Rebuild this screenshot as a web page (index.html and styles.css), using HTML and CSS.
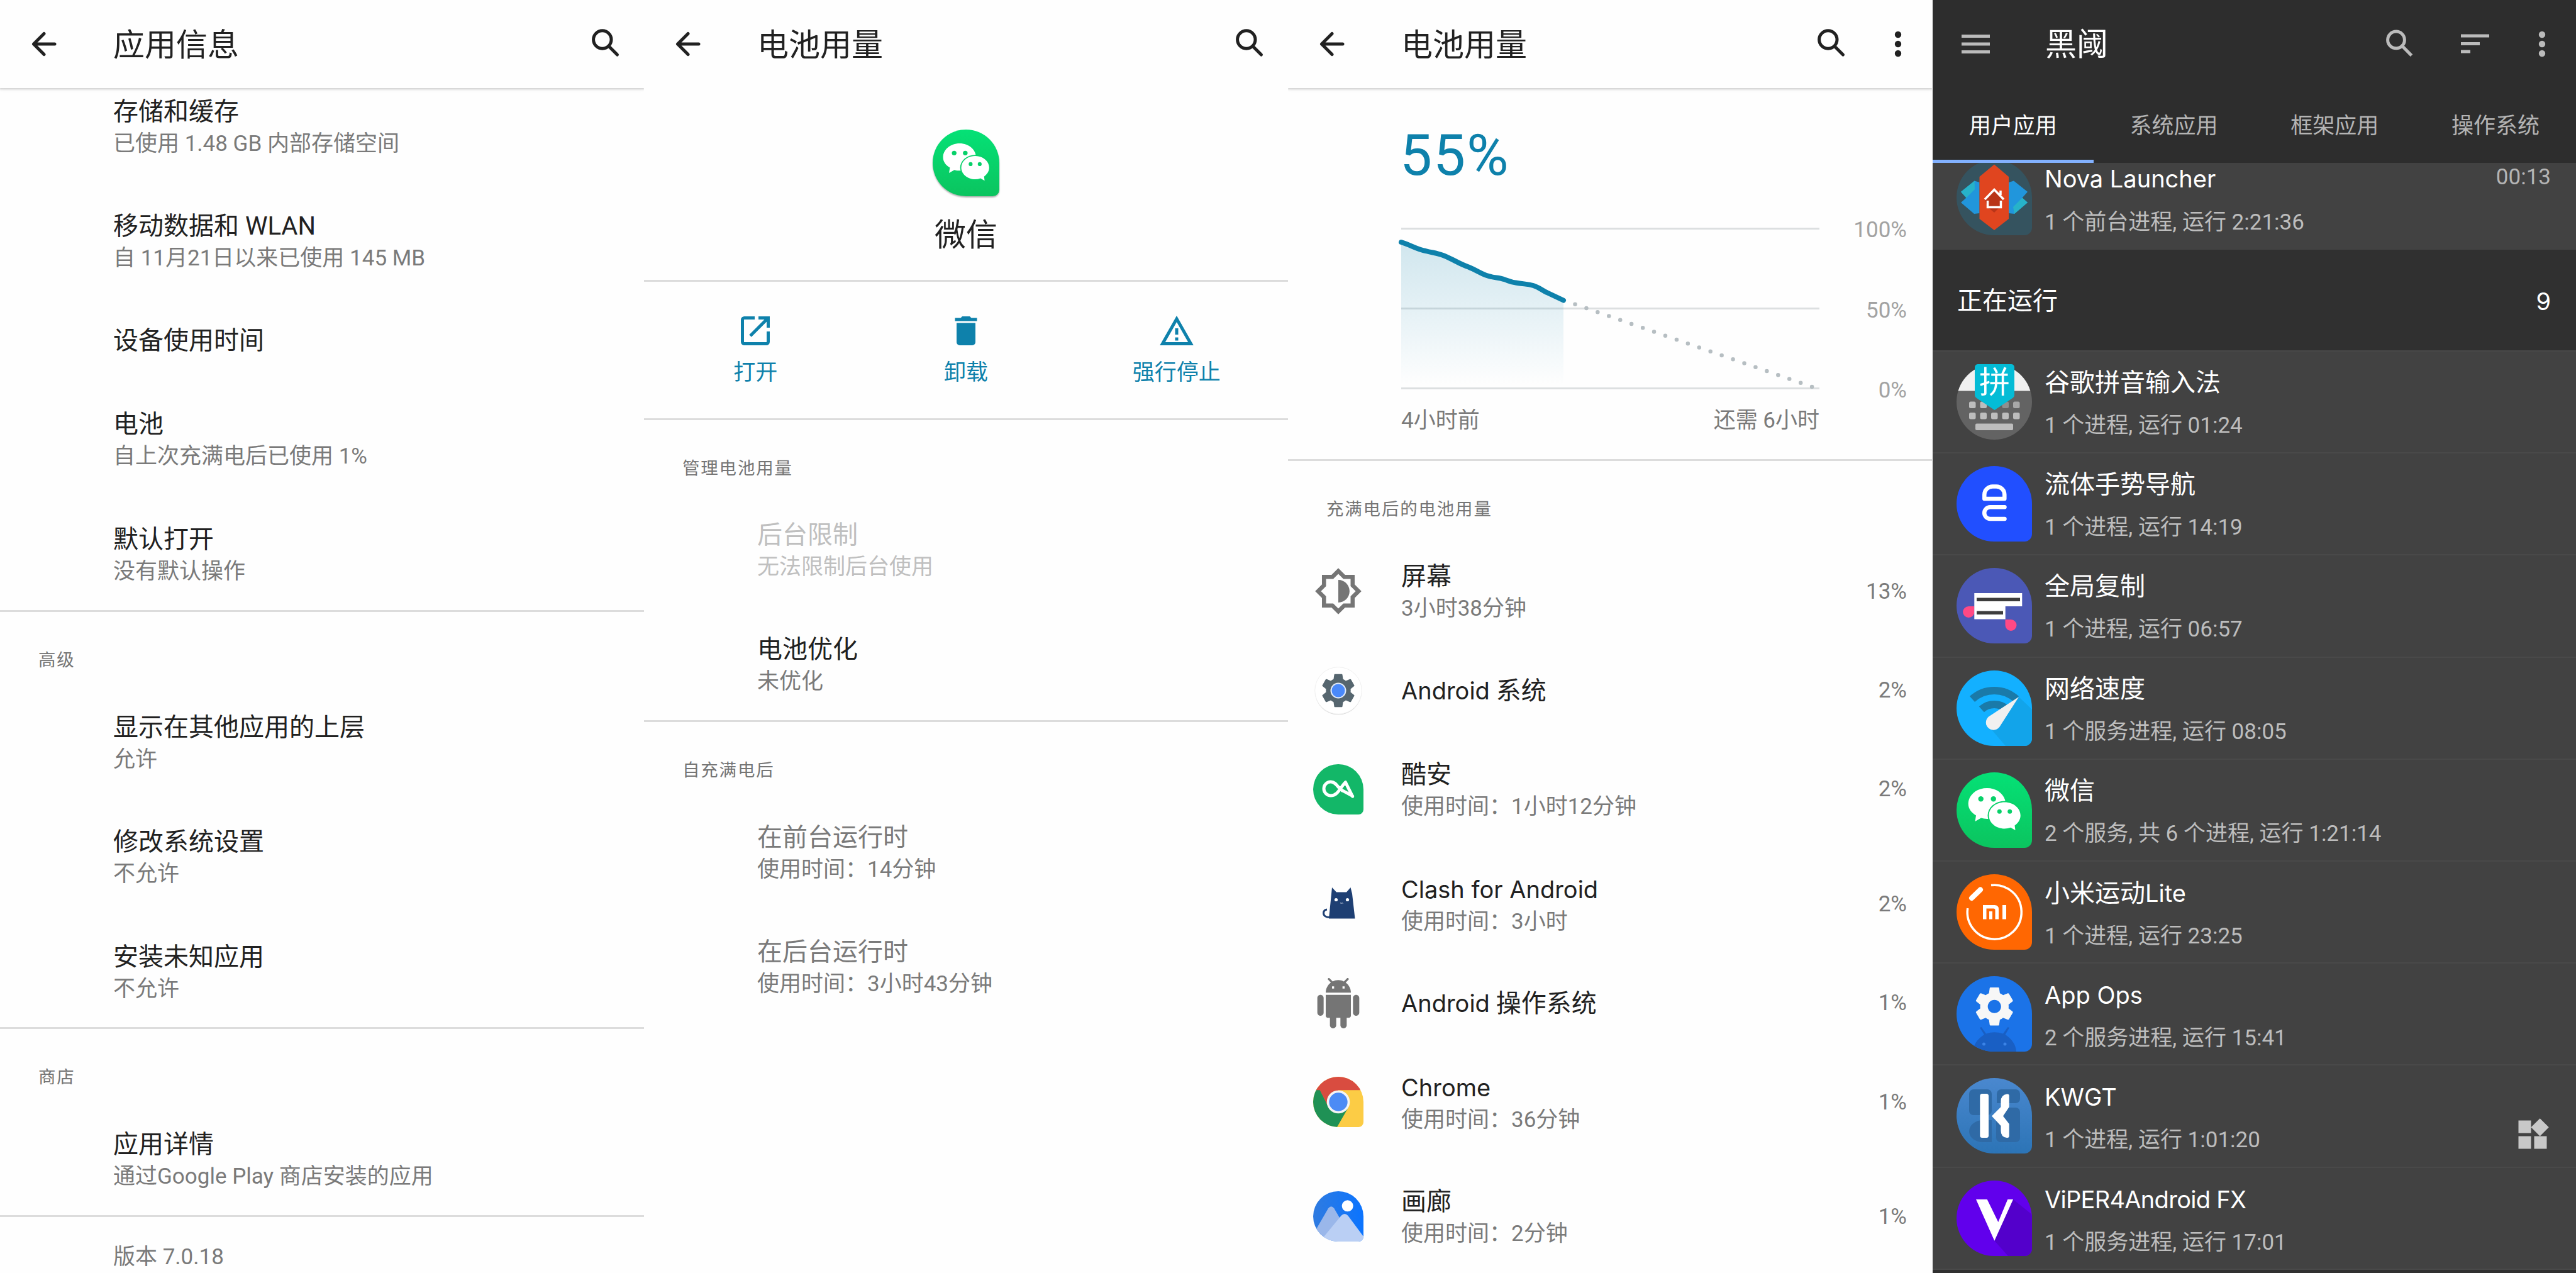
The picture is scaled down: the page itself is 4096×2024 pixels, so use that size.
FILE: index.html
```html
<!DOCTYPE html>
<html lang="zh-CN">
<head>
<meta charset="utf-8">
<title>应用信息</title>
<link rel="stylesheet" href="styles.css">
</head>
<body>
<svg class="defs" width="0" height="0" aria-hidden="true">
  <defs>
    <linearGradient id="g-wechat" x1="0" y1="0" x2="0" y2="1"><stop offset="0" stop-color="#05e176"/><stop offset="1" stop-color="#0bc45f"/></linearGradient>
    <linearGradient id="g-kwgt" x1="0" y1="0" x2="0" y2="1"><stop offset="0" stop-color="#4a88cf"/><stop offset="1" stop-color="#2c74b6"/></linearGradient>
    <linearGradient id="g-gallery" x1="0" y1="0" x2="1" y2="0"><stop offset="0" stop-color="#2f7be0"/><stop offset="1" stop-color="#0b74ff"/></linearGradient>
    <linearGradient id="g-area" x1="0" y1="0" x2="0" y2="1"><stop offset="0" stop-color="#0e81ab" stop-opacity=".19"/><stop offset=".45" stop-color="#0e81ab" stop-opacity=".11"/><stop offset="1" stop-color="#0e81ab" stop-opacity="0"/></linearGradient>
    <clipPath id="drop"><path d="M60 0A60 60 0 0 1 120 60V108A12 12 0 0 1 108 120H60A60 60 0 0 1 60 0Z"/></clipPath>
    <clipPath id="disc"><circle cx="60" cy="60" r="60"/></clipPath>
    <symbol id="i-back" viewBox="0 0 40 40"><path d="M37 20H4M20 3.5L3.5 20L20 36.5" fill="none" stroke="currentColor" stroke-width="5" stroke-linecap="round" stroke-linejoin="round"/></symbol>
    <symbol id="i-search" viewBox="0 0 48 48"><g fill="none" stroke="currentColor" stroke-width="5"><circle cx="19.8" cy="17" r="14.2"/><path d="M30 27.5L43.5 41" stroke-linecap="round"/></g></symbol>
    <symbol id="i-search-flat" viewBox="0 0 48 48"><g fill="none" stroke="currentColor" stroke-width="5"><circle cx="19" cy="17.4" r="13.4"/><path d="M29 27.5L43.5 42.3"/></g></symbol>
    <symbol id="i-more" viewBox="0 0 48 48"><g fill="currentColor"><circle cx="24" cy="9" r="5.2"/><circle cx="24" cy="24" r="5.2"/><circle cx="24" cy="39" r="5.2"/></g></symbol>
    <symbol id="i-menu" viewBox="0 0 48 48"><path fill="currentColor" d="M2 9h45v5H2zM2 21.500h45v5H2zM2 34h45v5H2z"/></symbol>
    <symbol id="i-sort" viewBox="0 0 48 48"><path fill="currentColor" d="M2 8.500h45v5H2zM2 21h30v5H2zM2 33.500h15v5H2z"/></symbol>
    <symbol id="i-open" viewBox="0 0 48 48"><g fill="none" stroke="currentColor" stroke-width="5"><path d="M23 3.500H6.500a3 3 0 0 0-3 3V41.500a3 3 0 0 0 3 3H41.500a3 3 0 0 0 3-3V25"/><path d="M29 3.500H44.500V19M44 4L16 32"/></g></symbol>
    <symbol id="i-trash" viewBox="0 0 48 48"><path fill="currentColor" d="M6.500 3.500H15.500L18 1H30L32.500 3.500H41.500V8.500H6.500ZM9 11.500H39V42a5 5 0 0 1-5 5H14a5 5 0 0 1-5-5Z"/></symbol>
    <symbol id="i-warn" viewBox="0 0 54 48"><path d="M27 5L49.500 44.500H4.500Z" fill="none" stroke="currentColor" stroke-width="5"/><path fill="currentColor" d="M24.500 20h5v10h-5zM24.500 34.500h5v5h-5z"/></symbol>
    <symbol id="i-gear" viewBox="0 0 24 24"><path fill="currentColor" d="M19.430 12.980c.04-.32.07-.64.07-.98s-.03-.66-.07-.98l2.110-1.650c.19-.15.24-.42.12-.64l-2-3.460c-.12-.22-.39-.3-.61-.22l-2.490 1c-.52-.4-1.080-.73-1.690-.98l-.38-2.650C14.460 2.180 14.250 2 14 2h-4c-.25 0-.46.18-.49.42l-.38 2.650c-.61.25-1.170.59-1.690.98l-2.490-1c-.23-.09-.49 0-.61.22l-2 3.460c-.13.22-.07.49.12.64l2.110 1.650c-.04.32-.07.65-.07.98s.03.66.07.98l-2.110 1.650c-.19.15-.24.42-.12.64l2 3.460c.12.22.39.3.61.22l2.490-1c.52.4 1.080.73 1.690.98l.38 2.650c.03.24.24.42.49.42h4c.25 0 .46-.18.49-.42l.38-2.650c.61-.25 1.170-.59 1.690-.98l2.490 1c.23.09.49 0 .61-.22l2-3.460c.12-.22.07-.49-.12-.64l-2.110-1.650zM12 15.500c-1.930 0-3.500-1.570-3.500-3.500s1.570-3.500 3.500-3.500 3.500 1.570 3.500 3.500-1.570 3.500-3.500 3.500z"/></symbol>
    <symbol id="a-wechat" viewBox="0 0 120 120">
      <g clip-path="url(#drop)"><rect width="120" height="120" fill="url(#g-wechat)"/></g>
      <path fill="#fff" d="M48.500 25C65 25 78 36 78 50S65 74 48.500 74q-5 0-9.500-1.400L29.500 78l1.500-9.500C23.500 64 18.700 57.500 18.700 50 18.700 36 32 25 48.500 25Z"/>
      <ellipse cx="76.500" cy="68.500" rx="27" ry="23" fill="#07d169"/>
      <path fill="#fff" d="M76.500 47.500C90.500 47.500 101.700 57 101.700 68.500 101.700 75 98 80.500 92.500 84.500L93.500 92 86 87.800q-4.500 1.700-9.500 1.700C62.500 89.500 51.500 80 51.500 68.500S62.500 47.500 76.500 47.500Z"/>
      <g fill="#07d169"><circle cx="38.700" cy="42.300" r="4.200"/><circle cx="58.700" cy="42.300" r="4.200"/><circle cx="68.300" cy="62.200" r="3.500"/><circle cx="84.700" cy="62.200" r="3.500"/></g>
    </symbol>
  </defs>
</svg>

<main class="screens">
  <section class="screen">
    <header class="bar bar--raised">
      <svg class="bar__back"><use href="#i-back"/></svg>
      <h1 class="bar__title">应用信息</h1>
      <svg class="bar__icon"><use href="#i-search"/></svg>
    </header>
    <div class="group group--first">
      <div class="row"><p class="row__title">存储和缓存</p><p class="row__sub">已使用 1.48 GB 内部存储空间</p></div>
      <div class="row"><p class="row__title">移动数据和 WLAN</p><p class="row__sub">自 11月21日以来已使用 145 MB</p></div>
      <div class="row row--single"><p class="row__title">设备使用时间</p></div>
      <div class="row"><p class="row__title">电池</p><p class="row__sub">自上次充满电后已使用 1%</p></div>
      <div class="row"><p class="row__title">默认打开</p><p class="row__sub">没有默认操作</p></div>
    </div>
    <div class="group">
      <h2 class="group__label">高级</h2>
      <div class="row"><p class="row__title">显示在其他应用的上层</p><p class="row__sub">允许</p></div>
      <div class="row"><p class="row__title">修改系统设置</p><p class="row__sub">不允许</p></div>
      <div class="row"><p class="row__title">安装未知应用</p><p class="row__sub">不允许</p></div>
    </div>
    <div class="group group--store">
      <h2 class="group__label">商店</h2>
      <div class="row"><p class="row__title">应用详情</p><p class="row__sub">通过Google Play 商店安装的应用</p></div>
    </div>
    <p class="version">版本 7.0.18</p>
  </section>

  <section class="screen">
    <header class="bar">
      <svg class="bar__back"><use href="#i-back"/></svg>
      <h1 class="bar__title">电池用量</h1>
      <svg class="bar__icon"><use href="#i-search"/></svg>
    </header>
    <div class="app-head">
      <svg class="app-head__icon"><use href="#a-wechat"/></svg>
      <p class="app-head__name">微信</p>
    </div>
    <div class="actions">
      <div class="action"><svg class="action__icon"><use href="#i-open"/></svg><span>打开</span></div>
      <div class="action"><svg class="action__icon"><use href="#i-trash"/></svg><span>卸载</span></div>
      <div class="action"><svg class="action__icon action__icon--wide"><use href="#i-warn"/></svg><span>强行停止</span></div>
    </div>
    <div class="group">
      <h2 class="group__label">管理电池用量</h2>
      <div class="row row--disabled"><p class="row__title">后台限制</p><p class="row__sub">无法限制后台使用</p></div>
      <div class="row"><p class="row__title">电池优化</p><p class="row__sub">未优化</p></div>
    </div>
    <div class="group group--last">
      <h2 class="group__label">自充满电后</h2>
      <div class="row row--info"><p class="row__title">在前台运行时</p><p class="row__sub">使用时间：14分钟</p></div>
      <div class="row row--info"><p class="row__title">在后台运行时</p><p class="row__sub">使用时间：3小时43分钟</p></div>
    </div>
  </section>

  <section class="screen">
    <header class="bar bar--raised bar--menu">
      <svg class="bar__back"><use href="#i-back"/></svg>
      <h1 class="bar__title">电池用量</h1>
      <svg class="bar__icon"><use href="#i-search"/></svg>
      <svg class="bar__icon"><use href="#i-more"/></svg>
    </header>
    <div class="battery">
      <p class="battery__level">55%</p>
      <div class="battery__chart">
        <svg class="battery__plot" viewBox="0 0 675 270">
          <path d="M10 11.500H675M10 138.500H675M10 265.500H675" stroke="#dcdfe0" stroke-width="3"/>
          <path d="M10 33C26 38 36 45 49 47C60 50 67 50 78 54.500C94 61 101 67 117 72.500C133 79 140 86 153 88C160 90 166 89 173 92C180 94 184 97 192 97.500C205 100 210 99 220 102C230 105 234 110 241.500 113L268 125.500V260H10Z" fill="url(#g-area)"/>
          <path d="M10 33C26 38 36 45 49 47C60 50 67 50 78 54.500C94 61 101 67 117 72.500C133 79 140 86 153 88C160 90 166 89 173 92C180 94 184 97 192 97.500C205 100 210 99 220 102C230 105 234 110 241.500 113L268 125.500" fill="none" stroke="#0e81ab" stroke-width="8" stroke-linecap="round" stroke-linejoin="round"/>
          <path d="M286.500 131.700L664 263.200" fill="none" stroke="#b6bec2" stroke-width="6.500" stroke-linecap="round" stroke-dasharray="0 18.990"/>
        </svg>
        <div class="battery__scale"><span>100%</span><span>50%</span><span>0%</span></div>
      </div>
      <div class="battery__range"><span>4小时前</span><span>还需 6小时</span></div>
    </div>
    <div class="usage">
      <h2 class="group__label">充满电后的电池用量</h2>
      <div class="use">
        <svg class="use__icon" viewBox="0 0 24.600 24.600"><path transform="translate(.3 .3)" fill="#757575" d="M20 8.690V4h-4.690L12 .69 8.690 4H4v4.690L.69 12 4 15.310V20h4.690L12 23.310 15.310 20H20v-4.690L23.310 12 20 8.690zM18 14.480V18h-3.520L12 20.480 9.520 18H6v-3.520L3.520 12 6 9.520V6h3.520L12 3.520 14.480 6H18v3.520L20.480 12 18 14.480zM12 6.500v11c3.030 0 5.500-2.470 5.500-5.500S15.030 6.500 12 6.500z"/></svg>
        <div class="use__text"><p class="row__title">屏幕</p><p class="row__sub">3小时38分钟</p></div><span class="use__pct">13%</span>
      </div>
      <div class="use use--single">
        <svg class="use__icon" viewBox="0 0 80 80"><circle cx="40" cy="41.500" r="37" fill="#d9d9d9"/><circle cx="40" cy="40" r="37.300" fill="#fff" stroke="#f0f0f0"/><g color="#56666f"><use href="#i-gear" x="8.500" y="8.500" width="63" height="63"/></g><circle cx="40" cy="40" r="14.500" fill="#56666f"/><circle cx="40" cy="40" r="12.500" fill="#e3ecfa"/><circle cx="40" cy="40" r="10.500" fill="#4a89fa"/></svg>
        <div class="use__text"><p class="row__title"><span class="product">Android</span> 系统</p></div><span class="use__pct">2%</span>
      </div>
      <div class="use">
        <svg class="use__icon" viewBox="0 0 120 120"><rect width="120" height="120" fill="#13b768" clip-path="url(#drop)"/><path d="M94 77L77 43C64 56 59 75 42 75A16.500 16.500 0 0 1 42 42C56 42 60 60 72 64L94 76Z" fill="none" stroke="#fff" stroke-width="7.500" stroke-linejoin="round"/></svg>
        <div class="use__text"><p class="row__title">酷安</p><p class="row__sub">使用时间：1小时12分钟</p></div><span class="use__pct">2%</span>
      </div>
      <div class="use">
        <svg class="use__icon" viewBox="0 0 80 80"><path fill="#1e3f73" d="M30 14L37 21.500H53L59.500 14L62 24L66.500 63.500H25L29 24Z"/><path d="M28 61.500C20 62 16.500 59 16.500 54.500Q17 49.500 22 49" fill="none" stroke="#1e3f73" stroke-width="3"/><circle cx="36.500" cy="33.500" r="2.600" fill="#fff"/><circle cx="54.500" cy="33.500" r="2.600" fill="#fff"/><path d="M43 38.500l1.500 1 1.500-1 1.500 1" stroke="#cdd6e6" fill="none"/></svg>
        <div class="use__text"><p class="row__title"><span class="product">Clash for Android</span></p><p class="row__sub">使用时间：3小时</p></div><span class="use__pct">2%</span>
      </div>
      <div class="use use--single">
        <svg class="use__icon" viewBox="0 0 24 24"><path fill="#757575" d="M6 18c0 .55.45 1 1 1h1v3.500c0 .83.67 1.500 1.500 1.500s1.500-.67 1.500-1.500V19h2v3.500c0 .83.67 1.500 1.500 1.500s1.500-.67 1.500-1.500V19h1c.55 0 1-.45 1-1V8H6v10zM3.500 8C2.670 8 2 8.670 2 9.500v7c0 .83.67 1.500 1.500 1.500S5 17.330 5 16.500v-7C5 8.670 4.330 8 3.500 8zm17 0c-.83 0-1.500.67-1.500 1.500v7c0 .83.67 1.500 1.500 1.500s1.500-.67 1.500-1.500v-7c0-.83-.67-1.500-1.500-1.500zm-4.970-5.840l1.300-1.300c.2-.2.2-.51 0-.71-.2-.2-.51-.2-.71 0l-1.480 1.480C13.850 1.230 12.950 1 12 1c-.96 0-1.860.23-2.660.63L7.850.15c-.2-.2-.51-.2-.71 0-.2.2-.2.51 0 .71l1.310 1.310C6.970 3.260 6 5.010 6 7h12c0-1.990-.97-3.750-2.470-4.840zM10 5H9V4h1v1zm5 0h-1V4h1v1z"/></svg>
        <div class="use__text"><p class="row__title"><span class="product">Android</span> 操作系统</p></div><span class="use__pct">1%</span>
      </div>
      <div class="use">
        <svg class="use__icon" viewBox="0 0 120 120"><g clip-path="url(#drop)"><rect width="120" height="120" fill="#fccc45"/><path fill="#1f9155" d="M0 30H16L37 73L60 60L84 73L57 120H0Z"/><path fill="#d94c40" d="M0 0H120V32H60V60L37 73L16 32H0Z"/></g><circle cx="60" cy="60" r="27.500" fill="#f4f4f4"/><circle cx="60" cy="60" r="22" fill="#4c8bf5"/></svg>
        <div class="use__text"><p class="row__title"><span class="product">Chrome</span></p><p class="row__sub">使用时间：36分钟</p></div><span class="use__pct">1%</span>
      </div>
      <div class="use">
        <svg class="use__icon" viewBox="0 0 120 120"><g clip-path="url(#drop)"><rect width="120" height="120" fill="url(#g-gallery)"/><path fill="#9ab7ea" d="M0 103L36 41Q43 32 50 41L96 120H0Z"/><path fill="#bacff4" d="M16 120L67 58Q75 50 83 58L126 116V120Z"/></g><circle cx="82" cy="35" r="13.500" fill="#fff"/></svg>
        <div class="use__text"><p class="row__title">画廊</p><p class="row__sub">使用时间：2分钟</p></div><span class="use__pct">1%</span>
      </div>
    </div>
  </section>

  <section class="screen screen--dark">
    <header class="dbar">
      <svg class="bar__icon"><use href="#i-menu"/></svg>
      <h1 class="dbar__title">黑阈</h1>
      <svg class="bar__icon"><use href="#i-search-flat"/></svg>
      <svg class="bar__icon dbar__sort"><use href="#i-sort"/></svg>
      <svg class="bar__icon"><use href="#i-more"/></svg>
    </header>
    <nav class="tabs"><span class="tab tab--on">用户应用</span><span class="tab">系统应用</span><span class="tab">框架应用</span><span class="tab">操作系统</span></nav>
    <div class="proc proc--top">
      <svg class="proc__icon" viewBox="0 0 120 120"><g clip-path="url(#drop)"><rect width="120" height="120" fill="#35535f"/></g><path fill="#2196dc" d="M28.600 33.500L36.500 36V85L28 86L7 68L15.500 60.500L7 51ZM91 33.500L83 36V85L92 86L113 68L104.500 60.500L113 51Z"/><path fill="#27b3c9" d="M28.600 33.500L7 51L15.500 60.500L29 47ZM92 86L113 68L104.500 60.500L90 75Z"/><path fill="#e0451f" d="M60 7.500L83 27V94L60 112L36.500 94V27Z"/><path fill="#b93518" d="M45 62L60 47L72 62V72L60 84L49 75Z"/><path d="M45 63L60 47.500L75 63M49.500 65V75.500H70.500V65M70 56V49" fill="none" stroke="#fff" stroke-width="3.500"/></svg>
      <div class="proc__text"><p class="proc__title"><span class="product">Nova Launcher</span></p><p class="proc__sub">1 个前台进程, 运行 2:21:36</p></div>
      <span class="proc__time">00:13</span>
    </div>
    <div class="running"><span>正在运行</span><span class="product">9</span></div>
    <div class="procs">
      <div class="proc">
        <svg class="proc__icon" viewBox="0 0 120 120"><g clip-path="url(#disc)"><rect width="120" height="120" fill="#636363"/><rect width="120" height="42.500" fill="#f1f1f1"/></g><g fill="#bdbdbd"><rect x="20" y="59.500" width="10.500" height="10.500" rx="2.500"/><rect x="37.500" y="59.500" width="10.500" height="10.500" rx="2.500"/><rect x="72.500" y="59.500" width="10.500" height="10.500" rx="2.500" fill="#8f8f8f"/><rect x="90" y="59.500" width="10.500" height="10.500" rx="2.500" fill="#a8a8a8"/><rect x="20" y="77" width="10.500" height="10.500" rx="2.500"/><rect x="37.500" y="77" width="10.500" height="10.500" rx="2.500"/><rect x="55" y="77" width="10.500" height="10.500" rx="2.500"/><rect x="72.500" y="77" width="10.500" height="10.500" rx="2.500"/><rect x="90" y="77" width="10.500" height="10.500" rx="2.500"/><rect x="30" y="94.500" width="60" height="10.500" rx="2"/></g><path fill="#04bcd6" d="M29 5a5 5 0 0 1 5-5H87a5 5 0 0 1 5 5V49Q92 52 89 54L60.500 73L32 54Q29 52 29 49Z"/><text class="pin" x="60.500" y="46" text-anchor="middle">拼</text></svg>
        <div class="proc__text"><p class="proc__title">谷歌拼音输入法</p><p class="proc__sub">1 个进程, 运行 01:24</p></div>
      </div>
      <div class="proc">
        <svg class="proc__icon" viewBox="0 0 120 120"><rect width="120" height="120" fill="#214fff" clip-path="url(#drop)"/><path d="M44.300 52V45.500a13 13 0 0 1 13-13h6a13 13 0 0 1 13 13V52ZM76.500 65.300H53.500a9.300 9.300 0 0 0 0 18.600H76.500" fill="none" stroke="#fff" stroke-width="6.500" stroke-linejoin="round" stroke-linecap="round"/></svg>
        <div class="proc__text"><p class="proc__title">流体手势导航</p><p class="proc__sub">1 个进程, 运行 14:19</p></div>
      </div>
      <div class="proc">
        <svg class="proc__icon" viewBox="0 0 120 120"><rect width="120" height="120" fill="#4b58b6" clip-path="url(#drop)"/><path fill="#ff4985" d="M28.500 61V70a9.200 9 0 1 1-9.200-9ZM77.500 82H86.500a9 9 0 1 1-9 9Z"/><path fill="#fff" d="M28.300 40H104.300V61H77.700V81.500H28.300Z"/><path fill="#3d3d3d" d="M32 47.500h69v5.500H32zM32 68.500h42v5.500H32z"/></svg>
        <div class="proc__text"><p class="proc__title">全局复制</p><p class="proc__sub">1 个进程, 运行 06:57</p></div>
      </div>
      <div class="proc">
        <svg class="proc__icon" viewBox="0 0 120 120"><g clip-path="url(#drop)"><rect width="120" height="120" fill="#13b0ff"/><path fill="#12a4ea" d="M99 42L120 62V120H78L54 92Z"/></g><g fill="none" stroke="#1a7aa9" stroke-width="12"><path d="M25 45.500A52 52 0 0 1 95 45.500"/><path d="M39.800 61.800A30 30 0 0 1 80.200 61.800"/></g><path fill="#f0f0f0" d="M99 42L69.500 88A12 12 0 1 1 51 73.500Z"/></svg>
        <div class="proc__text"><p class="proc__title">网络速度</p><p class="proc__sub">1 个服务进程, 运行 08:05</p></div>
      </div>
      <div class="proc">
        <svg class="proc__icon"><use href="#a-wechat"/></svg>
        <div class="proc__text"><p class="proc__title">微信</p><p class="proc__sub">2 个服务, 共 6 个进程, 运行 1:21:14</p></div>
      </div>
      <div class="proc">
        <svg class="proc__icon" viewBox="0 0 120 120"><rect width="120" height="120" fill="#ff6702" clip-path="url(#drop)"/><path d="M55 17.500A43 43 0 1 1 17.700 54" fill="none" stroke="#fff" stroke-width="3.500"/><path d="M24 38L38 24.500" stroke="#fff" stroke-width="8" stroke-linecap="round"/><path fill="#fff" d="M42 49H60.500Q67 49 67 55.500V71.500H61.500V57Q61.500 54.500 59 54.500H47.500V71.500H42ZM52 59H57V71.500H52ZM73 49H79V71.500H73Z"/></svg>
        <div class="proc__text"><p class="proc__title">小米运动<span class="product">Lite</span></p><p class="proc__sub">1 个进程, 运行 23:25</p></div>
      </div>
      <div class="proc">
        <svg class="proc__icon" viewBox="0 0 120 120"><g clip-path="url(#drop)"><rect width="120" height="120" fill="#1b73e8"/><path fill="#195fc4" d="M26 120Q27 104 44 93L37 82L39.500 81L47 91.500Q60 87 74 91.500L81.500 81L84 82L77.500 93Q94 104 95 120Z"/><circle cx="43.500" cy="108" r="2.500" fill="#3b83e6"/><circle cx="77" cy="108" r="2.500" fill="#3b83e6"/></g><g color="#f7f7f7"><use href="#i-gear" x="24" y="12" width="72.500" height="72.500"/></g></svg>
        <div class="proc__text"><p class="proc__title"><span class="product">App Ops</span></p><p class="proc__sub">2 个服务进程, 运行 15:41</p></div>
      </div>
      <div class="proc">
        <svg class="proc__icon" viewBox="0 0 120 120"><g clip-path="url(#drop)"><rect width="120" height="120" fill="url(#g-kwgt)"/><g fill="#2f6aa6"><rect x="20" y="18" width="36" height="41" rx="7"/><path d="M64 25a7 7 0 0 1 7-7H94a7 7 0 0 1 7 7V33a7 7 0 0 1-7 7H64ZM70 47H94a7 7 0 0 1 7 7V95a7 7 0 0 1-7 7H70a7 7 0 0 1-7-7V60ZM20 85A22 18 0 0 1 42 67H56V102H42A22 17 0 0 1 20 85Z"/></g></g><rect x="37.300" y="25" width="13.700" height="70" rx="3.500" fill="#fff"/><path fill="#fff" d="M83.700 28Q83.700 25 80 25.500Q70.500 27 70.500 37V46L56 60.500L70.500 76V84Q70.500 94 80 95Q83.700 95.500 83.700 92V73L74 60.500L83.700 46Z"/></svg>
        <div class="proc__text"><p class="proc__title"><span class="product">KWGT</span></p><p class="proc__sub">1 个进程, 运行 1:01:20</p></div>
        <svg class="proc__widget" viewBox="0 0 24 24"><path fill="#c8c8c8" d="M13 13v8h8v-8h-8zM3 21h8v-8H3v8zM3 3v8h8V3H3zm13.660-1.310L11 7.340 16.660 13l5.660-5.660-5.660-5.650z"/></svg>
      </div>
      <div class="proc">
        <svg class="proc__icon" viewBox="0 0 120 120"><g clip-path="url(#drop)"><rect width="120" height="120" fill="#6100ec"/><path fill="#5300cb" d="M90 30L120 54V120H82L60.300 95.800Z"/></g><path fill="#fff" d="M31 30H48.700L66.300 66L81.300 30H90L60.300 95.800Z"/></svg>
        <div class="proc__text"><p class="proc__title"><span class="product product--tight">ViPER4Android FX</span></p><p class="proc__sub">1 个服务进程, 运行 17:01</p></div>
      </div>
    </div>
  </section>
</main>
</body>
</html>
```

FILE: styles.css
```css
* { box-sizing: border-box; }

body {
  margin: 0;
  background: #fff;
  color: #212121;
  font-family: Roboto, "Noto Sans CJK SC", sans-serif;
  font-size: 35px;
}

h1, h2, p { margin: 0; font-weight: 400; white-space: nowrap; }
svg { display: block; flex: none; }
.defs { position: absolute; }

.screens {
  display: grid;
  grid-template-columns: repeat(4, 1024px);
  width: 4096px;
  height: 2024px;
  overflow: hidden;
}

.screen { height: 2024px; overflow: hidden; background: #fefefe; }

/* Latin product names next to 40px CJK text */
.product { font-family: Inter, sans-serif; font-size: 38px; }
.product--tight { letter-spacing: -.700px; }

/* light app bar */
.bar {
  display: flex;
  align-items: center;
  height: 140px;
  padding: 0 38px 0 50px;
  background: #fefefe;
}
.bar--raised { box-shadow: 0 1px 3px 1px rgba(0, 0, 0, .16), 0 4px 6px rgba(0, 0, 0, .03); }
.bar--menu { gap: 59px; padding-right: 30px; }
.bar__back { width: 40px; height: 40px; margin-right: 90px; }
.bar--menu .bar__back { margin-right: 31px; }
.bar__title { flex: 1; padding-top: 3px; font-size: 50px; line-height: 70px; }
.bar__icon { width: 48px; height: 48px; }

/* preference rows */
.group { border-bottom: 3px solid #dcdcdc; height: 663px; }
.group--first { height: 833px; padding-top: 0; }
.group--first .row:first-child { height: 152px; padding-top: 12px; }
.group--store { height: 299px; }
.group--last { border-bottom: 0; }
.group__label {
  height: 116px;
  padding: 57px 0 0 61px;
  color: #757575;
  font-size: 27.500px;
  line-height: 40px;
  letter-spacing: 1.800px;
}
.row { height: 182.300px; padding: 42px 0 0 180px; }
.row--single { height: 133px; }
.row__title { color: #212121; font-size: 40px; line-height: 52px; }
.row__sub { color: #7a7a7a; line-height: 50px; }
.row--disabled .row__title, .row--disabled .row__sub { color: #bfbfbf; }
.row--info .row__title { color: #7a7a7a; }
.version { padding: 39px 0 0 180px; color: #7a7a7a; line-height: 50px; }

/* app header and actions */
.app-head {
  display: flex;
  flex-direction: column;
  align-items: center;
  height: 308px;
  padding-top: 66px;
  border-bottom: 3px solid #dcdcdc;
}
.app-head__icon { width: 106px; height: 106px; filter: drop-shadow(0 2px 1px rgba(0, 0, 0, .3)); }
.app-head__name { margin-top: 27px; font-size: 50px; line-height: 70px; }
.actions {
  display: grid;
  grid-template-columns: repeat(3, 1fr);
  height: 220px;
  padding: 54px 10px 0;
  border-bottom: 3px solid #dcdcdc;
  color: #0e81ab;
}
.action { display: flex; flex-direction: column; align-items: center; gap: 18px; line-height: 50px; }
.action__icon { width: 48px; height: 48px; }
.action__icon--wide { width: 54px; }
.actions + .group { height: 480px; }
.actions + .group .group__label { height: 115px; }

/* battery chart */
.battery { height: 593px; border-bottom: 3px solid #dcdcdc; }
.battery__level { padding: 52px 0 0 178px; color: #0e81ab; font-size: 91px; line-height: 110px; letter-spacing: 1.800px; }
.battery__chart { display: flex; justify-content: space-between; padding: 50px 40px 0 170px; }
.battery__plot { width: 675px; height: 270px; }
.battery__scale {
  display: flex;
  flex-direction: column;
  justify-content: space-between;
  height: 295px;
  margin-top: -6px;
  color: #a2a2a2;
  line-height: 40px;
  text-align: right;
}
.battery__range {
  display: flex;
  justify-content: space-between;
  margin-top: 3px;
  padding: 0 179px 0 180px;
  color: #7a7a7a;
  line-height: 50px;
}

/* battery usage list */
.use { display: flex; align-items: center; height: 182.300px; padding: 0 40px; }
.use--single { height: 132.500px; }
.use__icon { width: 80px; height: 80px; margin-right: 60px; }
.use__text { flex: 1; padding-top: 4px; }
.use--single .use__text { padding-top: 1px; }
.use__pct { color: #7a7a7a; }

/* dark process manager */
.screen--dark { margin-left: 1px; background: #303030; color: #fff; }
.dbar { display: flex; align-items: center; height: 140px; padding: 0 30px 0 44px; background: #2d2d2d; color: #bbb; }
.dbar__title { flex: 1; margin-left: 87px; padding-top: 2px; color: #fff; font-size: 50px; line-height: 70px; }
.dbar__sort { margin: 0 59px 0 72px; }
.tabs { display: grid; grid-template-columns: repeat(4, 1fr); height: 119px; background: #2d2d2d; color: #b4b4b4; }
.tab { padding-top: 36px; line-height: 50px; text-align: center; }
.tab--on { border-bottom: 5px solid #82b1ff; color: #fff; }
.procs { border-bottom: 2px solid #494949; }
.proc {
  display: flex;
  height: 162.200px;
  padding: 20px 40px 0 38px;
  background: #424242;
  border-top: 2px solid #494949;
}
.proc--top { height: 138px; padding-top: 0; border: 0; overflow: hidden; }
.proc--top .proc__icon { margin-top: -5px; }
.proc--top .proc__text { margin-top: -3px; }
.proc--top .proc__sub { margin-top: 15px; }
.proc__icon { width: 120px; height: 120px; margin-right: 20px; overflow: visible; }
.proc__text { flex: 1; padding-top: 2px; }
.proc--top .proc__text { padding-top: 0; }
.proc__title { font-size: 40px; line-height: 56px; }
.proc__sub { margin-top: 14px; color: #bdbdbd; line-height: 52px; }
.proc__time { color: #b4b4b4; line-height: 45px; }
.proc__widget { width: 60px; height: 60px; margin: 60px -1px 0 0; }
.pin { fill: #fff; font-family: "Noto Sans CJK SC", sans-serif; font-size: 49px; }
.running {
  display: flex;
  align-items: center;
  justify-content: space-between;
  height: 160px;
  padding: 3px 40px 0 39px;
  background: #303030;
  font-size: 40px;
  line-height: 56px;
}
```
